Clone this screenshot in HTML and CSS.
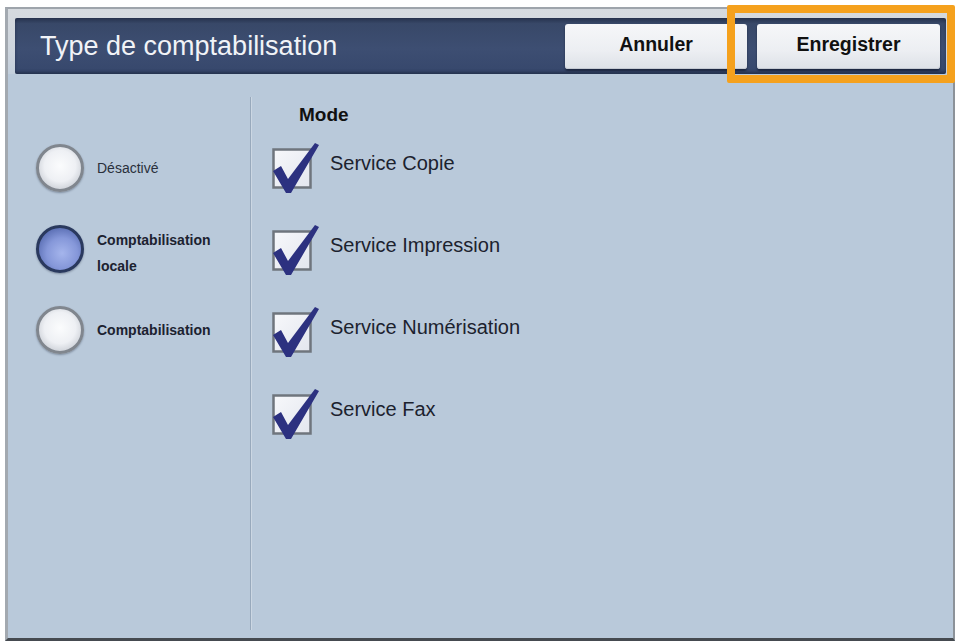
FILE: index.html
```html
<!DOCTYPE html>
<html lang="fr">
<head>
<meta charset="utf-8">
<title>Type de comptabilisation</title>
<link rel="stylesheet" href="styles.css">
</head>
<body>
<div class="screen">
  <div class="header-wrap">
    <div class="header">
      <h1 class="title">Type de comptabilisation</h1>
      <div class="actions">
        <button class="btn btn-cancel">Annuler</button>
        <button class="btn btn-save">Enregistrer</button>
      </div>
    </div>
  </div>
  <div class="highlight"></div>
  <div class="body">
    <div class="left-col">
      <div class="radio-row">
        <span class="radio"></span>
        <span class="radio-label regular">Désactivé</span>
      </div>
      <div class="radio-row">
        <span class="radio selected"></span>
        <span class="radio-label two-line">Comptabilisation<br>locale</span>
      </div>
      <div class="radio-row">
        <span class="radio"></span>
        <span class="radio-label">Comptabilisation</span>
      </div>
    </div>
    <div class="right-col">
      <div class="mode-title">Mode</div>
      <div class="check-list">
        <div class="check-row">
          <svg class="checkbox" width="48" height="54" viewBox="0 0 48 54"><defs><linearGradient id="bx1" x1="0" y1="0" x2="1" y2="1"><stop offset="0" stop-color="#f7f8fb"/><stop offset="1" stop-color="#e3e6ee"/></linearGradient></defs><rect x="1.5" y="7.5" width="37" height="38" fill="url(#bx1)" stroke="#6f757d" stroke-width="2.5"/><path d="M1 29 L9 24 L16 37 L43 1 L47 3 L19 51 L14 51 Z" fill="#2c3180"/></svg>
          <span class="check-label">Service Copie</span>
        </div>
        <div class="check-row">
          <svg class="checkbox" width="48" height="54" viewBox="0 0 48 54"><rect x="1.5" y="7.5" width="37" height="38" fill="url(#bx1)" stroke="#6f757d" stroke-width="2.5"/><path d="M1 29 L9 24 L16 37 L43 1 L47 3 L19 51 L14 51 Z" fill="#2c3180"/></svg>
          <span class="check-label">Service Impression</span>
        </div>
        <div class="check-row">
          <svg class="checkbox" width="48" height="54" viewBox="0 0 48 54"><rect x="1.5" y="7.5" width="37" height="38" fill="url(#bx1)" stroke="#6f757d" stroke-width="2.5"/><path d="M1 29 L9 24 L16 37 L43 1 L47 3 L19 51 L14 51 Z" fill="#2c3180"/></svg>
          <span class="check-label">Service Numérisation</span>
        </div>
        <div class="check-row">
          <svg class="checkbox" width="48" height="54" viewBox="0 0 48 54"><rect x="1.5" y="7.5" width="37" height="38" fill="url(#bx1)" stroke="#6f757d" stroke-width="2.5"/><path d="M1 29 L9 24 L16 37 L43 1 L47 3 L19 51 L14 51 Z" fill="#2c3180"/></svg>
          <span class="check-label">Service Fax</span>
        </div>
      </div>
    </div>
  </div>
</div>
</body>
</html>
```

FILE: styles.css
```css
* { box-sizing: border-box; }
html, body { margin: 0; padding: 0; background: #ffffff; }
body {
  font-family: "Liberation Sans", Arial, sans-serif;
  width: 959px;
  height: 642px;
  overflow: hidden;
}
.screen {
  position: relative;
  margin: 7px 0 0 5px;
  width: 950px;
  height: 634px;
  display: flex;
  flex-direction: column;
  background: #b9c9da;
  border-top: 2px solid #9ea4ab;
  border-left: 3px solid #a3a9b0;
  border-right: 2px solid #8c9299;
  border-bottom: 3px solid #454a50;
}
.header-wrap {
  padding: 9px 7px 0 7px;
  background: linear-gradient(180deg, #d6dadf 0%, #cfd6de 60%, #c3cfdc 100%);
}
.header {
  height: 56px;
  display: flex;
  align-items: center;
  padding: 0 6px 0 25px;
  background: linear-gradient(180deg, #26324d 0%, #384868 10%, #3d4e72 55%, #36476c 100%);
  box-shadow: inset 0 -2px 3px rgba(20, 28, 48, 0.5);
  border-radius: 2px;
}
.title {
  margin: 0;
  font-size: 27px;
  font-weight: normal;
  color: #f1f3f7;
}
.actions {
  margin-left: auto;
  display: flex;
  gap: 10px;
}
.btn {
  height: 45px;
  border: none;
  border-radius: 3px;
  font-family: "Liberation Sans", Arial, sans-serif;
  font-weight: bold;
  font-size: 19.5px;
  color: #111;
  background: linear-gradient(180deg, #f6f7f9 0%, #eceef2 60%, #dde1e7 100%);
  box-shadow: 0 2px 2px rgba(10, 15, 30, 0.55), inset 0 -1px 0 #c5cad2;
  padding: 0 0 3px 0;
}
.btn-cancel { width: 182px; }
.btn-save { width: 183px; }
.highlight {
  position: absolute;
  left: 719px;
  top: -4px;
  width: 228px;
  height: 78px;
  border: 8px solid #f5a11d;
  border-radius: 2px;
}
.body {
  flex: 1;
  display: flex;
}
.left-col {
  width: 243px;
  margin: 23px 0 8px 0;
  padding: 47px 0 0 28px;
  border-right: 1px solid #98a9bc;
  box-shadow: 1px 0 0 #ccd7e3;
  display: flex;
  flex-direction: column;
  gap: 33px;
}
.radio-row {
  display: flex;
  align-items: center;
  height: 48px;
}
.radio {
  width: 48px;
  height: 48px;
  flex: none;
  border-radius: 50%;
  border: 3px solid #80868e;
  background: radial-gradient(circle at 50% 45%, #fbfcfd 0%, #eef0f4 50%, #cdd1d8 78%, #9ca2aa 100%);
  box-shadow: 0 1px 2px rgba(40, 50, 70, 0.4);
}
.radio.selected {
  border-color: #2a395e;
  background: radial-gradient(circle at 55% 60%, #a5b5ec 0%, #8597d9 45%, #5d71b6 75%, #33467e 100%);
}
.radio-label {
  margin-left: 13px;
  font-size: 14px;
  font-weight: bold;
  color: #1c2230;
  line-height: 26px;
}
.radio-label.regular { font-weight: normal; color: #2a303c; }
.radio-label.two-line { padding-top: 8px; }
.right-col {
  flex: 1;
  padding: 30px 0 0 21px;
}
.mode-title {
  margin-left: 27px;
  font-size: 19px;
  font-weight: bold;
  line-height: 22px;
  color: #111;
  margin-bottom: 22px;
}
.check-list {
  display: flex;
  flex-direction: column;
  gap: 42px;
}
.check-row {
  display: flex;
  align-items: flex-start;
  height: 40px;
}
.checkbox {
  display: block;
  flex: none;
  margin-top: -6px;
}
.check-label {
  margin-left: 10px;
  font-size: 20px;
  line-height: 30px;
  color: #1c222e;
}
```
